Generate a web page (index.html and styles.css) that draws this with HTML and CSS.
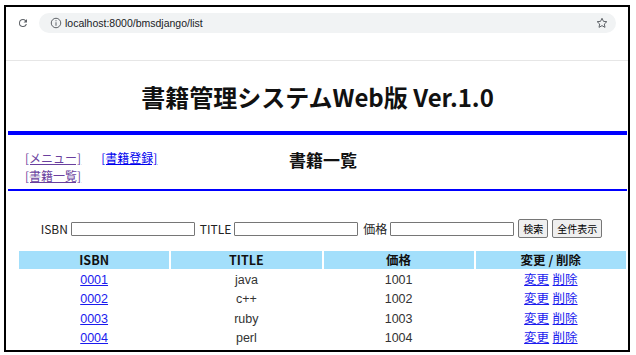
FILE: index.html
```html
<!DOCTYPE html>
<html lang="ja">
<head>
  <meta charset="UTF-8" />
  <title>書籍一覧</title>
  <link rel="stylesheet" href="styles.css">
</head>
<body>
  <div class="frame">
    <div class="toolbar">
      <svg class="reload" width="12" height="12" viewBox="0 0 24 24">
        <path d="M17.65 6.35A7.96 7.96 0 0 0 12 4a8 8 0 1 0 7.73 10h-2.08A6 6 0 1 1 12 6c1.66 0 3.14.69 4.22 1.78L13 11h7V4l-2.35 2.35z" fill="#5f6368"/>
      </svg>
      <div class="omnibox">
        <svg class="info" width="12" height="12" viewBox="0 0 24 24">
          <circle cx="12" cy="12" r="9.5" fill="none" stroke="#5f6368" stroke-width="2"/>
          <rect x="11" y="10.5" width="2" height="7" fill="#5f6368"/>
          <rect x="11" y="6.5" width="2" height="2" fill="#5f6368"/>
        </svg>
        <span class="url">localhost:8000/bmsdjango/list</span>
        <svg class="star" width="12" height="12" viewBox="0 0 24 24">
          <path d="M12 2.5l2.9 6.2 6.8.7-5.1 4.6 1.4 6.7L12 17.3l-6 3.4 1.4-6.7-5.1-4.6 6.8-.7z" fill="none" stroke="#5f6368" stroke-width="2" stroke-linejoin="round"/>
        </svg>
      </div>
    </div>

    <div class="page">
      <header class="site-header">
        <h1>書籍管理システムWeb版 Ver.1.0</h1>
      </header>
      <hr class="rule-thick">

      <div class="subbar">
        <div class="nav-links">
          <a href="#" class="visited">[メニュー]</a><a href="#">[書籍登録]</a><a href="#" class="visited">[書籍一覧]</a>
        </div>
        <h2>書籍一覧</h2>
        <div></div>
      </div>
      <hr class="rule-thin">

      <form class="search">
        <label>ISBN</label><input type="text">
        <label>TITLE</label><input type="text">
        <label>価格</label><input type="text">
        <button type="button">検索</button>
        <button type="button">全件表示</button>
      </form>

      <table class="books">
        <thead>
          <tr><th>ISBN</th><th>TITLE</th><th>価格</th><th>変更 / 削除</th></tr>
        </thead>
        <tbody>
          <tr><td><a href="#">0001</a></td><td>java</td><td>1001</td><td><a href="#">変更</a> <a href="#">削除</a></td></tr>
          <tr><td><a href="#">0002</a></td><td>c++</td><td>1002</td><td><a href="#">変更</a> <a href="#">削除</a></td></tr>
          <tr><td><a href="#">0003</a></td><td>ruby</td><td>1003</td><td><a href="#">変更</a> <a href="#">削除</a></td></tr>
          <tr><td><a href="#">0004</a></td><td>perl</td><td>1004</td><td><a href="#">変更</a> <a href="#">削除</a></td></tr>
        </tbody>
      </table>
    </div>
  </div>
</body>
</html>
```

FILE: styles.css
```css
body {
  margin: 0;
  background: #fff;
  font-family: "Liberation Sans", "Noto Sans CJK JP", sans-serif;
  color: #222;
}

.frame {
  margin: 5px 0 0 4px;
  width: 622px;
  height: 343px;
  border: 2px solid #000;
  overflow: hidden;
}

.toolbar {
  height: 54px;
  border-bottom: 1px solid #e6e6e6;
  display: flex;
  align-items: flex-start;
  padding: 10px 0 0 11px;
  box-sizing: border-box;
}

.reload {
  margin: 0;
}

.omnibox {
  flex: 1;
  margin: -4px 12px 0 10px;
  height: 20px;
  border-radius: 10px;
  background: #f1f3f4;
  display: flex;
  align-items: center;
  padding: 0 8px 0 11px;
}

.url {
  font-size: 10.5px;
  color: #202124;
  margin-left: 3px;
  flex: 1;
}

.page {
  padding: 0 1px 0 2px;
}

.site-header {
  height: 70px;
  display: flex;
  align-items: center;
  justify-content: center;
}

h1 {
  margin: 0;
  font-family: "Noto Sans CJK JP", sans-serif;
  font-size: 24px;
  font-weight: bold;
  color: #111;
}

.rule-thick {
  margin: 0;
  border: none;
  height: 4px;
  background: #0000ff;
}

.rule-thin {
  margin: 0;
  border: none;
  height: 2px;
  background: #0000ff;
}

.subbar {
  display: grid;
  grid-template-columns: 1fr auto 1fr;
  padding: 14px 6px 4px 17px;
  height: 54px;
  box-sizing: border-box;
}

.nav-links {
  width: 175px;
  font-family: "Noto Sans CJK JP", sans-serif;
  font-size: 12px;
  line-height: 18px;
}

.nav-links a {
  display: inline-block;
  white-space: nowrap;
  color: #0000ee;
  margin-right: 20px;
}

.nav-links a.visited {
  color: #6a3f9e;
}

h2 {
  margin: 0;
  font-family: "Noto Sans CJK JP", sans-serif;
  font-size: 17px;
  font-weight: bold;
  color: #111;
  line-height: 22px;
}

.search {
  display: flex;
  justify-content: center;
  align-items: center;
  gap: 3px;
  margin: 28px 0 0 6px;
  font-size: 12px;
  font-family: "Noto Sans CJK JP", sans-serif;
}

.search label {
  margin-left: 2px;
}

.search input {
  width: 118px;
  height: 10px;
  border: 1px solid #767676;
  border-radius: 1px;
  padding: 1px 2px;
  margin: 0;
}

.search button {
  margin-left: 1px;
  height: 19px;
  padding: 0 4px;
  font-size: 10px;
  font-family: "Noto Sans CJK JP", sans-serif;
  background: #efefef;
  border: 1px solid #767676;
  border-radius: 2px;
}

.books {
  margin: 11px 0 0 9px;
  width: 611px;
  border-spacing: 2px;
  font-size: 12.5px;
  font-family: "Liberation Sans", "Noto Sans CJK JP", sans-serif;
}

.books th {
  background: #a3dffb;
  height: 18px;
  padding: 0;
  line-height: 16px;
  font-family: "Noto Sans CJK JP", sans-serif;
  font-size: 12.5px;
  font-weight: bold;
  color: #111;
  width: 25%;
}

.books td {
  text-align: center;
  height: 17.5px;
  line-height: 16px;
  padding: 0;
  color: #333;
}

.books a {
  color: #1a1aee;
}
```
